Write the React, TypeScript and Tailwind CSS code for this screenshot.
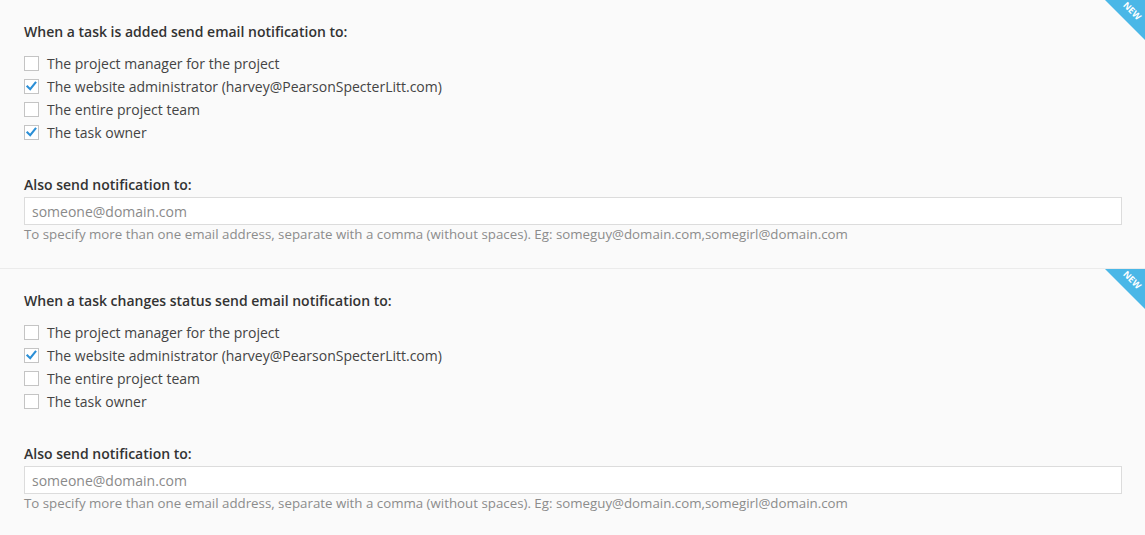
import React from "react";

type Opt = { label: string; checked: boolean };

function Check({ checked }: { checked: boolean }) {
  return (
    <span className="flex h-[15px] w-[15px] shrink-0 items-center justify-center border border-[#c4c4c4] bg-white">
      {checked && (
        <svg viewBox="0 0 16 16" className="h-[13px] w-[13px]">
          <path d="M3 8 L6.4 11.4 L12.8 3.4" fill="none" stroke="#2b8fd6" strokeWidth="2.6" strokeLinecap="square" />
        </svg>
      )}
    </span>
  );
}

function Ribbon() {
  return (
    <div className="pointer-events-none absolute right-0 top-0 h-[40px] w-[40px] overflow-hidden">
      <div className="absolute right-0 top-0 h-0 w-0 border-l-[40px] border-t-[40px] border-l-transparent border-t-[#4ab7e7]" />
      <span className="absolute left-[16px] top-[7px] h-[8px] w-[22px] rotate-45 text-center text-[9px] font-bold leading-[8px] text-white">
        NEW
      </span>
    </div>
  );
}

function Section({ title, options, last }: { title: string; options: Opt[]; last?: boolean }) {
  return (
    <section className={"relative pl-6 pr-[23px] pt-[22px] pb-[25px] " + (last ? "" : "border-b border-[#ebebeb]")}>
      <Ribbon />
      <h3 className="text-[14px] font-semibold leading-[20px] text-[#333]">{title}</h3>
      <div className="mt-[10px] flex flex-col">
        {options.map((o) => (
          <label key={o.label} className="flex h-[23px] items-center gap-[8px] text-[14px] text-[#444]">
            <Check checked={o.checked} />
            <span>{o.label}</span>
          </label>
        ))}
      </div>
      <div className="mt-[31px] text-[14px] font-semibold leading-[20px] text-[#333]">Also send notification to:</div>
      <input
        className="mt-[2px] block h-[28px] w-full border border-[#dcdcdc] bg-white px-[7px] text-[14px] text-[#555] outline-none placeholder:text-[#8a8a8a]"
        placeholder="someone@domain.com"
      />
      <p className="text-[13.3px] leading-[18px] text-[#8c8c8c]">
        To specify more than one email address, separate with a comma (without spaces). Eg: someguy@domain.com,somegirl@domain.com
      </p>
    </section>
  );
}

export default function App() {
  const admin = "The website administrator (harvey@PearsonSpecterLitt.com)";
  return (
    <div className="min-h-[535px] bg-[#fafafa]" style={{ fontFamily: '"Open Sans", sans-serif' }}>
      <Section
        title="When a task is added send email notification to:"
        options={[
          { label: "The project manager for the project", checked: false },
          { label: admin, checked: true },
          { label: "The entire project team", checked: false },
          { label: "The task owner", checked: true },
        ]}
      />
      <Section
        last
        title="When a task changes status send email notification to:"
        options={[
          { label: "The project manager for the project", checked: false },
          { label: admin, checked: true },
          { label: "The entire project team", checked: false },
          { label: "The task owner", checked: false },
        ]}
      />
    </div>
  );
}
